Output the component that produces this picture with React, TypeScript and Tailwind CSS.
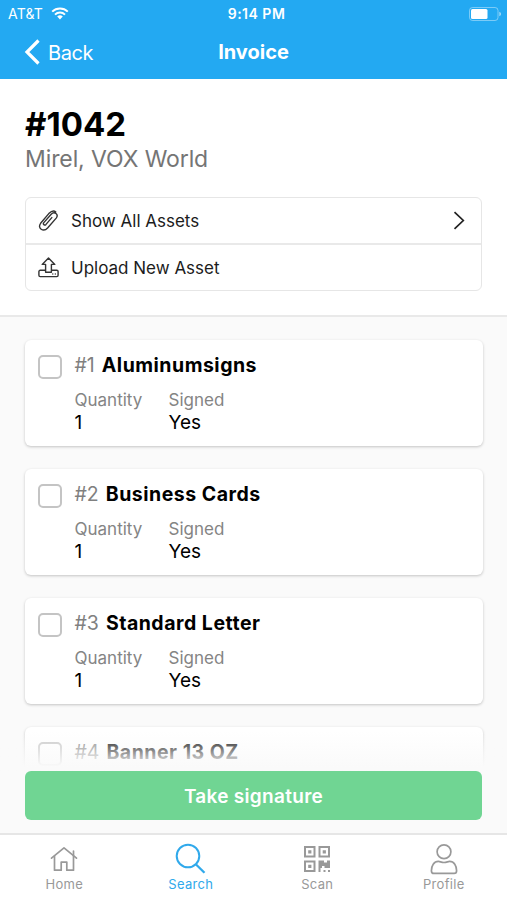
import { useState } from "react";
import type { ReactNode } from "react";

type Item = { id: number; name: string; quantity?: number; signed?: string };

const items: Item[] = [
  { id: 1, name: "Aluminumsigns", quantity: 1, signed: "Yes" },
  { id: 2, name: "Business Cards", quantity: 1, signed: "Yes" },
  { id: 3, name: "Standard Letter", quantity: 1, signed: "Yes" },
  { id: 4, name: "Banner 13 OZ" },
];

function WifiIcon() {
  return (
    <svg width="18" height="13" viewBox="0 0 18 13" fill="none" stroke="white" strokeWidth="2">
      <path d="M1.2 4.6a11.2 11.2 0 0 1 15.6 0" />
      <path d="M4 7.6a7.2 7.2 0 0 1 10 0" />
      <path d="M9 12.4 6.2 9.6a4 4 0 0 1 5.6 0z" fill="white" stroke="none" />
    </svg>
  );
}

function BatteryIcon() {
  return (
    <svg width="33" height="14" viewBox="0 0 33 14" fill="none">
      <rect x="0.5" y="0.5" width="28.5" height="13" rx="3" stroke="white" strokeOpacity="0.4" />
      <rect x="2" y="2" width="16.5" height="10" rx="1.5" fill="white" />
      <path d="M30.3 4.8v4.4c1.4-.6 1.7-1.3 1.7-2.2s-.3-1.6-1.7-2.2z" fill="white" fillOpacity="0.55" />
    </svg>
  );
}

function PaperclipIcon() {
  return (
    <svg width="21" height="21" viewBox="0 0 21 21" fill="none" stroke="#333" strokeWidth="1.4" strokeLinecap="round" strokeLinejoin="round">
      <path d="M13.8 7.6 8 14.4c-1.4 1.5-3.5-.2-2.2-1.8l7.4-8.4c3.2-3.4 7.8.3 5 3.9l-8.6 9.900c-4.200 4.600-10.600.2-7-4.700l8.200-9.700c3-3 5.300-3.200 7-1.700" />
    </svg>
  );
}

function UploadIcon() {
  return (
    <svg width="21" height="21" viewBox="0 0 21 21" fill="none" stroke="#333" strokeWidth="1.4" strokeLinejoin="round">
      <path d="M7.6 13.3H2.2c-.8 0-1.3.5-1.3 1.3v3.7c0 .8.5 1.3 1.3 1.3h16.6c.8 0 1.3-.5 1.3-1.300v-3.700c0-.8-.5-1.300-1.300-1.300h-5.400" />
      <path d="M10.5 1 4.2 7.4h3.4v7.9h5.8V7.4h3.4z" />
      <path d="M14.3 17h1M16.8 17h1" />
    </svg>
  );
}

function HomeIcon() {
  return (
    <svg width="28" height="26" viewBox="0 0 28 26" fill="none" stroke="currentColor" strokeWidth="1.7" strokeLinecap="round" strokeLinejoin="round">
      <path d="M1.5 12.2 14 1.8l12.5 10.4" />
      <path d="M4.5 10.3v13.9h6.7v-8.1h5.6v8.1h6.7V10.3" />
      <path d="M23.5 9.6V5" />
    </svg>
  );
}

function SearchIcon() {
  return (
    <svg width="32" height="32" viewBox="0 0 32 32" fill="none" stroke="currentColor" strokeWidth="2">
      <circle cx="13" cy="13" r="11.3" />
      <path d="m20.8 21.2 8.7 8.6" strokeWidth="2.3" />
    </svg>
  );
}

function QrIcon() {
  return (
    <svg width="28" height="28" viewBox="0 0 28 28" fill="currentColor">
      <path fillRule="evenodd" d="M1 1h11.5v11.5H1zM3 3v7.5h7.5V3z" />
      <path fillRule="evenodd" d="M15.5 1H27v11.5H15.5zM17.5 3v7.5H25V3z" />
      <path fillRule="evenodd" d="M1 15.5h11.5V27H1zM3 17.5V25h7.5v-7.5z" />
      <path d="M5.2 5.2h3.2v3.2H5.2zM19.7 5.2h3.2v3.2h-3.2zM5.2 19.7h3.2v3.2H5.2z" />
      <path d="M15.5 15.5H21v2h3v-2h3v7.5h-5.5v-2H19v2h-1.5v4h-2zM20.5 25h2v2h-2zM25 25h2v2h-2z" />
    </svg>
  );
}

function ProfileIcon() {
  return (
    <svg width="28" height="32" viewBox="0 0 28 32" fill="none" stroke="currentColor" strokeWidth="1.7">
      <circle cx="14" cy="8.8" r="6.9" />
      <path d="M8.4 18.4c1.600 0 3 1.100 5.600 1.100s4-1.100 5.600-1.100c4.500 0 7 4.400 7 9.300 0 2-.8 2.700-2.500 2.700H3.900c-1.700 0-2.500-.7-2.500-2.700 0-4.900 2.500-9.300 7-9.300z" />
    </svg>
  );
}

const tabs: { label: string; icon: ReactNode }[] = [
  { label: "Home", icon: <HomeIcon /> },
  { label: "Search", icon: <SearchIcon /> },
  { label: "Scan", icon: <QrIcon /> },
  { label: "Profile", icon: <ProfileIcon /> },
];

export default function App() {
  const [activeTab, setActiveTab] = useState("Search");
  const [checked, setChecked] = useState<number[]>([]);

  const toggle = (id: number) => {
    setChecked(checked.includes(id) ? checked.filter((c) => c !== id) : [...checked, id]);
  };

  return (
    <div className="flex h-[900px] w-[507px] flex-col overflow-hidden bg-white font-['Inter',sans-serif] text-black">
      <header className="h-[79px] shrink-0 bg-[#23a9f2] text-white">
        <div className="grid h-[27px] grid-cols-3 items-center pl-2 pr-[5px]">
          <div className="flex items-center gap-2">
            <span className="text-[14px] tracking-[0.2px]">AT&amp;T</span>
            <WifiIcon />
          </div>
          <span className="pl-[3px] text-center text-[14px] font-semibold tracking-[0.5px]">9:14 PM</span>
          <div className="flex justify-end">
            <BatteryIcon />
          </div>
        </div>
        <div className="grid h-[50px] grid-cols-3 items-center px-6">
          <button className="flex items-center gap-2 text-[20px] tracking-[-0.4px]">
            <svg width="16" height="26" viewBox="0 0 16 26" fill="none" stroke="white" strokeWidth="3.2">
              <path d="M14.5 1.5 3 13l11.5 11.5" />
            </svg>
            <span className="pt-px">Back</span>
          </button>
          <h1 className="text-center text-[20px] font-bold">Invoice</h1>
        </div>
      </header>

      <section className="h-[238px] shrink-0 border-b-2 border-[#e9e9e9] px-[25px] pt-[25px]">
        <h2 className="text-[33px] font-bold leading-[40px]">#1042</h2>
        <p className="text-[23px] leading-[30px] tracking-[-0.1px] text-[#757575]">Mirel, VOX World</p>
        <div className="mt-[23px] h-[94px] divide-y-2 divide-[#e9e9e9] rounded-md border-[1.5px] border-[#e6e6e6] text-[17px] text-[#1c1c1c]">
          <button className="flex h-[47px] w-full items-center pl-3 pr-4">
            <PaperclipIcon />
            <span className="ml-3 flex-1 pt-0.5 text-left">Show All Assets</span>
            <svg width="12" height="19" viewBox="0 0 12 19" fill="none" stroke="#222" strokeWidth="1.7">
              <path d="m1.5 1.2 8.8 8.3-8.8 8.3" />
            </svg>
          </button>
          <button className="flex h-[45px] w-full items-center pl-3">
            <UploadIcon />
            <span className="ml-3 pt-0.5">Upload New Asset</span>
          </button>
        </div>
      </section>

      <main className="flex min-h-0 flex-1 flex-col bg-[#fafafa]">
        <div className="relative min-h-0 flex-1 overflow-hidden pl-[25px] pr-6 pt-[23px]">
          <div className="flex flex-col gap-[23px]">
            {items.map((item) => (
              <div key={item.id} className="flex h-[106px] shrink-0 rounded-md bg-white pl-[12.5px] shadow-[0_1px_3px_rgba(0,0,0,0.22)]">
                <button
                  aria-label={item.name}
                  onClick={() => toggle(item.id)}
                  className={`mt-[15px] h-6 w-6 shrink-0 rounded-[5px] border-2 border-[#c4c4c4] ${
                    checked.includes(item.id) ? "bg-[#23a9f2]" : "bg-white"
                  }`}
                />
                <div className="ml-[13px] pt-[11px]">
                  <div className="flex gap-[7px] text-[19.5px] leading-7">
                    <span className="text-[#808080]">#{item.id}</span>
                    <span className="font-bold tracking-[0.5px]">{item.name}</span>
                  </div>
                  {item.signed && (
                    <div className="mt-2.5 flex">
                      <div className="w-[94px]">
                        <div className="text-[17px] leading-[22px] text-[#848484]">Quantity</div>
                        <div className="text-[19px] leading-6">{item.quantity}</div>
                      </div>
                      <div>
                        <div className="text-[17px] leading-[22px] text-[#848484]">Signed</div>
                        <div className="text-[19px] leading-6">{item.signed}</div>
                      </div>
                    </div>
                  )}
                </div>
              </div>
            ))}
          </div>
          <div className="pointer-events-none absolute inset-x-0 bottom-0 h-10 bg-linear-to-b from-[#fafafa]/0 to-[#fafafa] to-90%" />
        </div>
        <div className="shrink-0 px-[25px] pb-[13px]">
          <button className="h-[49px] w-full rounded-md bg-[#70d593] pt-[3px] text-[19px] font-semibold tracking-[0.3px] text-white">
            Take signature
          </button>
        </div>
      </main>

      <nav className="grid h-[67px] shrink-0 grid-cols-4 border-t-2 border-[#e6e6e6] bg-white pl-px">
        {tabs.map((tab) => (
          <button
            key={tab.label}
            onClick={() => setActiveTab(tab.label)}
            className={`flex flex-col items-center ${
              activeTab === tab.label ? "text-[#30a9eb]" : "text-[#999]"
            }`}
          >
            <span className="mt-1.5 flex h-[35px] items-center">{tab.icon}</span>
            <span className="text-[13px] leading-4 tracking-[0.3px]">{tab.label}</span>
          </button>
        ))}
      </nav>
    </div>
  );
}
